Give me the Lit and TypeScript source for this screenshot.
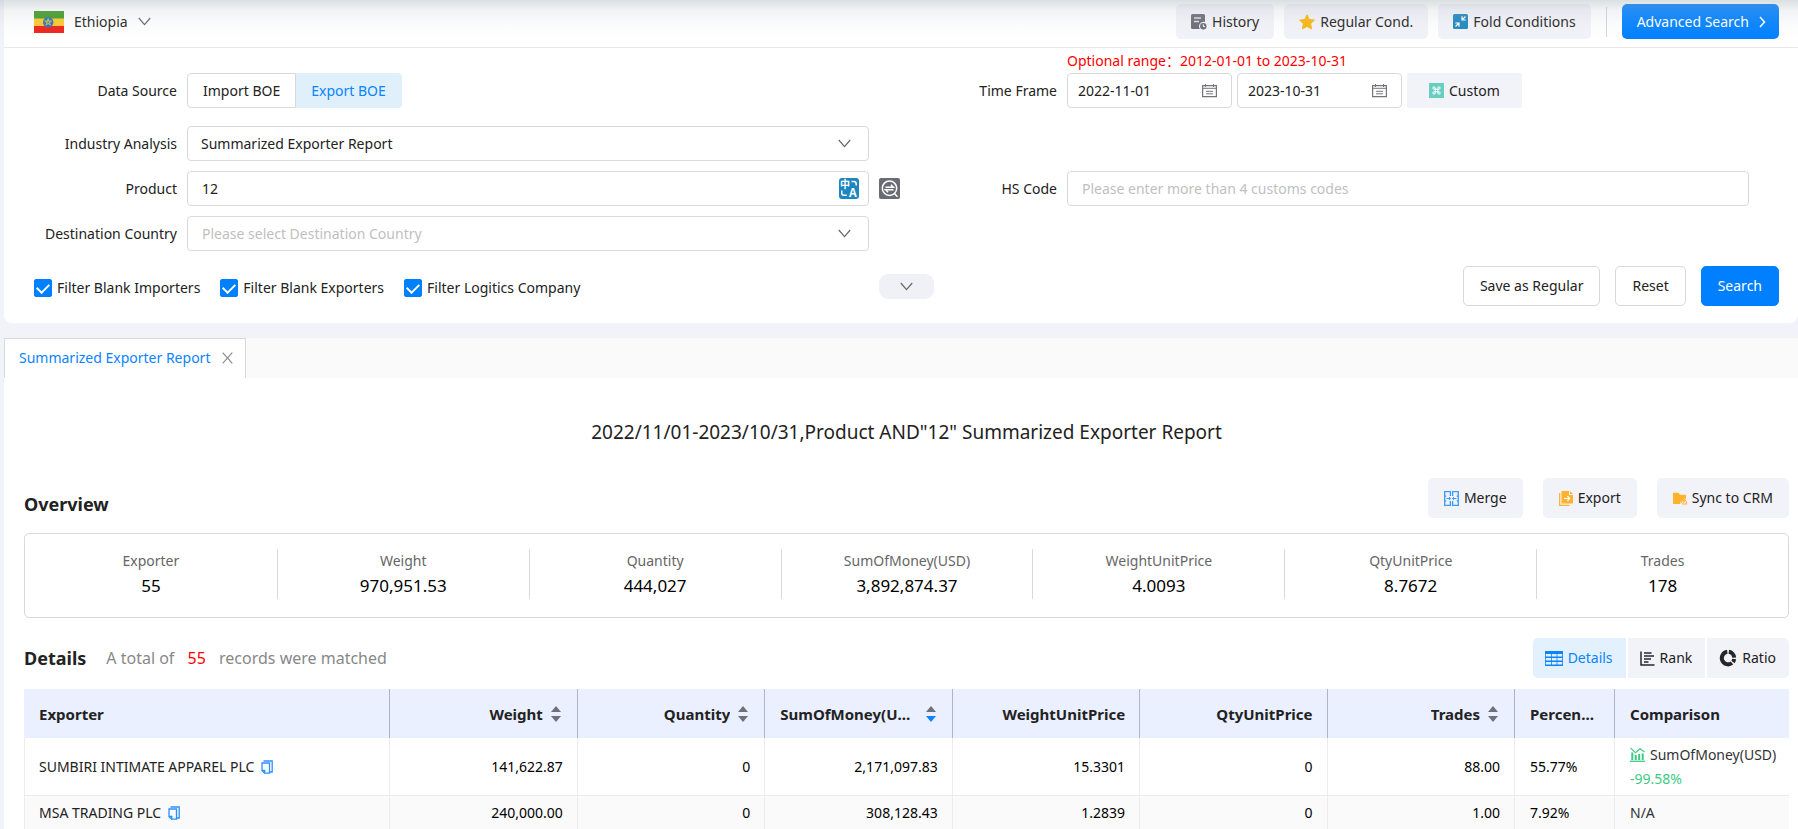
import { LitElement, html, css, nothing } from 'lit';
import { customElement, property, state } from 'lit/decorators.js';
import { classMap } from 'lit/directives/class-map.js';

const chevron = html`<svg class="chevron" width="13" height="9" viewBox="0 0 13 9" fill="none" stroke="#666" stroke-width="1.2"><path d="M.8 1l5.700 6.600L12.200 1" /></svg>`;

const icons: Record<string, unknown> = {
  history: html`<svg width="16" height="16" viewBox="0 0 16 16"><path d="M1.5 0h11A1.5 1.5 0 0 1 14 1.5V8a4.500 4.500 0 0 0-5 7H1.500A1.500 1.500 0 0 1 0 13.500v-12A1.500 1.500 0 0 1 1.500 0z" fill="#6b6b75"/><path d="M3 4h7M3 7.500h5" stroke="#dcdde5" stroke-width="1.6"/><circle cx="12.300" cy="12.200" r="3.200" fill="#6b6b75"/><path d="M12.300 10.300v2.200h1.600" fill="none" stroke="#fff" stroke-width="1"/></svg>`,
  star: html`<svg width="16" height="16" viewBox="0 0 16 16"><path d="M8 .8l2.200 4.700 5.200.6-3.800 3.600 1 5.200L8 12.400l-4.600 2.500 1-5.200L.6 6.100l5.200-.6z" fill="#f8b60f" stroke="#f8b60f" stroke-linejoin="round"/></svg>`,
  fold: html`<svg width="15" height="15" viewBox="0 0 15 15"><rect width="15" height="15" rx="1.5" fill="#1d86bf"/><path d="M12.500 2.500L9.500 5.500M9 2.300v3.700h3.700M2.500 12.500l3-3M2.300 9H6v3.700" fill="none" stroke="#fff" stroke-width="1.2"/></svg>`,
  custom: html`<svg width="15" height="15" viewBox="0 0 15 15"><rect width="15" height="15" fill="#67cfc0"/><path d="M6.200 6.200V5A1.200 1.200 0 1 0 5 6.200h5A1.200 1.200 0 1 0 8.800 5v5A1.200 1.200 0 1 0 10 8.800H5A1.200 1.200 0 1 0 6.200 10z" fill="none" stroke="#fff" stroke-width="1"/></svg>`,
  calendar: html`<svg width="15" height="14" viewBox="0 0 15 14" fill="none" stroke="#74747e"><path d="M.6 1.700h13.800v11H.6z" stroke-width="1.2"/><path d="M.6 4.300h13.800M3.500 0v3M11.500 0v3M4 7.300h7M4 9.800h7"/></svg>`,
  merge: html`<svg width="15" height="15" viewBox="0 0 15 15" fill="none" stroke="#3a9bff" stroke-width="1.3"><path d="M6.400 5V.7H.7v4.500h1.600M.7 5v9.300h5.700V10M.7 9.800h1.600M8.600 5V.7h5.700v4.500h-1.600M14.300 5v9.300H8.600V10M14.300 9.800h-1.600"/><path d="M2.500 7.500h3.800M5 6l1.500 1.500L5 9M12.500 7.500H8.700M10 6L8.500 7.500 10 9" stroke-width="1"/></svg>`,
  export: html`<svg width="14" height="15" viewBox="0 0 14 15"><path d="M.7 2v12.300h9.800" fill="none" stroke="#ffb22c" stroke-width="1.3"/><path d="M2.500 0H10v4h4v8.500H2.500z" fill="#ffb22c"/><path d="M11 0l3 3h-3z" fill="#ffb22c"/><path d="M5 7.500h5.500M8.400 5.200l2.300 2.300-2.300 2.300" fill="none" stroke="#fff" stroke-width="1.2"/></svg>`,
  sync: html`<svg width="14" height="13" viewBox="0 0 14 13"><path d="M0 .8h5.500l1.500 2h6v4.400l-2-1-1 2.200-3 1.400V12H0z" fill="#ffb22c"/><path d="M8 11.500c0-2 1-3 3.200-3M10 6.300l2.500 2.200L10 10.600M9 12h4.500V9.500" fill="none" stroke="#ffb22c" stroke-width="1.2"/></svg>`,
  details: html`<svg width="18" height="15" viewBox="0 0 18 15" fill="none" stroke="#0a84ff"><path d="M0 1.500h18" stroke-width="3"/><path d="M.5 1v13.500h17V1M6.500 2v12M12 2v12" stroke-width=".8"/><path d="M0 6.200h18M0 10.200h18M0 14.300h18" stroke-width="1.4"/></svg>`,
  rank: html`<svg width="15" height="15" viewBox="0 0 15 15" fill="none" stroke="#26262a"><path d="M1 .5V14h13.500" stroke-width="1.5"/><path d="M4 2h7.500M4 5h10M4 8h7M4 11h4.500" stroke-width="1.5"/></svg>`,
  ratio: html`<svg width="18" height="18" viewBox="0 0 18 18" fill="none" stroke="#26262a" stroke-width="4"><path d="M8.300 2.800A6.300 6.300 0 1 0 13 14"/><path d="M9.800 2.800A6.300 6.300 0 0 1 15.200 8.600"/><path d="M15.200 10A6.300 6.300 0 0 1 14 13"/></svg>`,
  copy: html`<svg width="12" height="14" viewBox="0 0 12 14" fill="none" stroke="#2b90ff" stroke-width="1.3"><path d="M2.500 1h8.700v11H9"/><path d="M1 3h7.500v10.200H3.500L1 10.700z"/><path d="M1 10.500h2.700v2.700"/></svg>`,
  trend: html`<svg width="15" height="15" viewBox="0 0 15 15" fill="none" stroke="#3ccb83"><path d="M0 14.300h15" stroke-width="1.3"/><path d="M2.300 5.500V13M5.700 8V13M9.200 7V13M12.700 6.500V13" stroke-width="2"/><path d="M.5 .8l5 5 4.500-4L14.500 5" stroke-width="1.2"/></svg>`,
};

const close = html`<svg width="11" height="12" viewBox="0 0 11 12" stroke="#8c8c8c" stroke-width="1.2"><path d="M.7 .7l9.600 10.600M10.300 .7L.7 11.300" /></svg>`;

const flag = html`<svg class="flag" width="30" height="22" viewBox="0 0 30 22" role="img" aria-label="Ethiopia flag"><path fill="#3f9a24" d="M0 0h30v8H0z"/><path fill="#fdc82f" d="M0 7.500h30v8H0z"/><path fill="#ef2118" d="M0 15h30v7H0z"/><circle cx="14.200" cy="11.300" r="5.200" fill="#2a6ebb"/><path d="M14.200 7.500l2.300 6.700-5.800-4.200h7l-5.800 4.200z" fill="none" stroke="#d9c64a" stroke-width=".8"/></svg>`;

const shared = css`
  * { box-sizing: border-box; }
  button, input, select { font: inherit; color: inherit; margin: 0; }
  button { cursor: pointer; padding: 0; border: 0; background: none; }
  svg { display: block; flex: none; overflow: visible; }
`;

@customElement('icon-button')
class IconButton extends LitElement {
  @property() icon = '';
  @property({ reflect: true }) size = 'small';
  static styles = [shared, css`
    :host { display: block; }
    button { display: flex; align-items: center; justify-content: center; gap: 5px; height: 35px; padding: 0 15px; border-radius: 5px; background: #f2f3f9; white-space: nowrap; }
    :host([size='large']) button { height: 40px; padding: 0 16px; }
    :host([size='wide']) button { padding: 0 22px; border-radius: 2px; }
  `];
  render() {
    return html`<button type="button">${icons[this.icon] ?? nothing}<slot></slot></button>`;
  }
}

interface Column { name: string; sort?: 'none' | 'desc'; align: 'left' | 'right'; kind: string; }

const columns: Column[] = [
  { name: 'Exporter', align: 'left', kind: 'name' },
  { name: 'Weight', align: 'right', sort: 'none', kind: 'num' },
  { name: 'Quantity', align: 'right', sort: 'none', kind: 'num' },
  { name: 'SumOfMoney(USD)', align: 'right', sort: 'desc', kind: 'num' },
  { name: 'WeightUnitPrice', align: 'right', kind: 'num' },
  { name: 'QtyUnitPrice', align: 'right', kind: 'num' },
  { name: 'Trades', align: 'right', sort: 'none', kind: 'num' },
  { name: 'Percentage', align: 'left', kind: 'pct' },
  { name: 'Comparison', align: 'left', kind: 'cmp' },
];

const rows = [
  { name: 'SUMBIRI INTIMATE APPAREL PLC', nums: ['141,622.87', '0', '2,171,097.83', '15.3301', '0', '88.00'], pct: '55.77%', change: '-99.58%' },
  { name: 'MSA TRADING PLC', nums: ['240,000.00', '0', '308,128.43', '1.2839', '0', '1.00'], pct: '7.92%', change: '' },
];

@customElement('exporter-table')
class ExporterTable extends LitElement {
  static styles = [shared, css`
    :host { display: block; }
    table { width: 100%; table-layout: fixed; border-collapse: separate; border-spacing: 0; }
    .c-num { width: 10.62%; }
    .c-pct { width: 100px; }
    .c-cmp { width: 174px; }
    th { height: 49px; padding: 0 14px 0 15px; background: #eaf0ff; border-right: 1px solid #b0b3c4; font-size: 15px; font-weight: 700; color: #222; text-align: left; }
    th:last-child { border-right: 0; }
    .head { display: flex; align-items: center; gap: 8px; width: 100%; font-weight: 700; }
    .head.right { justify-content: flex-end; }
    button.head { padding-right: 2px; }
    .label { overflow: hidden; text-overflow: ellipsis; white-space: nowrap; }
    td { height: 35px; padding: 0 14px 0 15px; border-right: 1px solid #ececec; border-bottom: 1px solid #ececec; line-height: 24px; color: #000; white-space: nowrap; }
    td:first-child { padding-left: 14px; border-left: 1px solid #ececec; color: #222; }
    td:last-child { border-right: 0; padding-right: 0; color: #333; }
    tr:nth-child(even) td { background: #fafafa; }
    tr.tall td { height: 58px; }
    .right { text-align: right; }
    .line { display: flex; align-items: center; gap: 7px; }
    .trend { display: flex; align-items: center; gap: 5px; }
    .down { color: #3ccb83; }
  `];
  render() {
    return html`<table>
      <colgroup>${columns.map((c) => html`<col class="c-${c.kind}">`)}</colgroup>
      <thead><tr>${columns.map((c) => html`<th scope="col">${c.sort
        ? html`<button type="button" class="head ${c.align}"><span class="label">${c.name}</span><svg width="10" height="16" viewBox="0 0 10 16"><path d="M0 6l5-6 5 6z" fill="#70707a"/><path d="M0 10l5 6 5-6z" fill=${c.sort === 'desc' ? '#0a84ff' : '#70707a'}/></svg></button>`
        : html`<div class="head ${c.align}"><span class="label">${c.name}</span></div>`}</th>`)}</tr></thead>
      <tbody>${rows.map((r) => html`<tr class=${classMap({ tall: !!r.change })}>
        <td><div class="line">${r.name}<button type="button" aria-label="Copy name">${icons.copy}</button></div></td>
        ${r.nums.map((n) => html`<td class="right">${n}</td>`)}
        <td>${r.pct}</td>
        <td>${r.change ? html`<div class="trend">${icons.trend}SumOfMoney(USD)</div><div class="down">${r.change}</div>` : 'N/A'}</td>
      </tr>`)}</tbody>
    </table>`;
  }
}

@customElement('app-root')
class AppRoot extends LitElement {
  @state() private source = 'Export BOE';

  static styles = [shared, css`
    :host { display: block; position: relative; height: 100vh; overflow: hidden; padding-left: 4px; background: #f2f3f9; color: #222; font: 14px/20px "Noto Sans", "Noto Sans CJK SC", sans-serif; }
    .shade { position: absolute; inset: 0 0 auto 0; height: 42px; pointer-events: none; background: linear-gradient(rgba(160, 172, 180, .38), rgba(180, 190, 196, .2) 10px, rgba(200, 206, 210, .08) 24px, rgba(255, 255, 255, 0)); }
    .search { background: #fff; border-radius: 0 0 8px 8px; }
    header { display: flex; align-items: center; gap: 10px; height: 48px; padding: 0 19px 4px 30px; border-bottom: 1px solid #e8e8e8; }
    .country { display: flex; align-items: center; gap: 10px; margin-right: auto; }
    .rule { width: 1px; height: 30px; margin: 0 5px; background: #d5d5da; }
    .primary { background: #0080ff; color: #fff; border-radius: 5px; }
    .advanced { display: flex; align-items: center; gap: 10px; height: 35px; padding: 0 13px 0 15px; }
    .fields { display: grid; grid-template-columns: 1fr 1fr; gap: 10px 0; padding: 0 17px; }
    .field { display: grid; grid-template-columns: 156px minmax(0, 1fr) 22px; gap: 0 10px; align-items: end; }
    .field.first { margin-bottom: 8px; }
    .field.start { grid-column: 1; }
    .field > .name { line-height: 35px; text-align: right; }
    .box { display: flex; align-items: center; height: 35px; border: 1px solid #d9d9d9; border-radius: 4px; background: #fff; }
    .box input { flex: 1; min-width: 0; height: 33px; border: 0; outline: 0; background: none; padding: 0 0 0 14px; }
    .box input::placeholder { color: #bfbfbf; }
    .pick { display: grid; grid-template-columns: minmax(0, 1fr) 30px; align-items: center; }
    .pick select { grid-area: 1 / 1 / 2 / 3; height: 33px; padding: 0 30px 0 13px; border: 0; outline: 0; appearance: none; background: none; }
    .pick .chevron { grid-area: 1 / 2; pointer-events: none; }
    .pick .empty { padding-left: 14px; color: #bfbfbf; }
    .translate { margin-right: 9px; }
    .lookup { align-self: center; }
    .radios { display: flex; }
    .radios label { display: flex; align-items: center; height: 35px; padding: 0 15px; border: 1px solid #d9d9d9; border-radius: 4px 0 0 4px; cursor: pointer; }
    .radios label + label { border-radius: 0 4px 4px 0; border-left: 0; }
    .radios label.on { background: #dff0fa; border-color: #dff0fa; color: #0a84ff; }
    .radios input { position: absolute; opacity: 0; pointer-events: none; }
    .hint { color: #f00; line-height: 25px; }
    .times { display: flex; gap: 5px; }
    .times .box { width: 165px; padding-right: 14px; }
    .times input { padding-left: 10px; }
    .foot { display: grid; grid-template-columns: 1fr auto 1fr; align-items: center; padding: 15px 19px 17px 30px; }
    .checks { display: flex; gap: 20px; padding-top: 4px; }
    .checks label { display: flex; align-items: center; gap: 5px; }
    .checks input { appearance: none; display: grid; place-items: center; width: 18px; height: 18px; border: 1px solid #0080ff; border-radius: 2px; }
    .checks input:checked { background: #0080ff; }
    .checks input:checked::after { content: ""; width: 6px; height: 10px; margin-bottom: 3px; border: solid #fff; border-width: 0 2px 2px 0; transform: rotate(45deg); }
    .more { display: grid; place-items: center; width: 55px; height: 25px; border-radius: 9px; background: #f0f1f7; }
    .go { display: flex; justify-content: flex-end; gap: 15px; }
    .go button { height: 40px; padding: 0 16px; border-radius: 5px; border: 1px solid #d9d9d9; }
    .go .primary { border-color: #0080ff; }
    .tabs { display: flex; margin-top: 15px; height: 40px; background: #fafafa; }
    .tab { display: flex; align-items: center; gap: 12px; padding: 0 12px 2px 14px; border: 1px solid #d9d9d9; border-bottom: 0; background: #fff; color: #0a84ff; }
    .report { min-height: 460px; padding: 39px 9px 0 20px; background: #fff; }
    h1 { margin: 0 0 31px; font-size: 19px; line-height: 30px; font-weight: 400; text-align: center; }
    h2 { margin: 0; font-size: 18px; line-height: 28px; font-weight: 700; }
    .bar { display: flex; align-items: flex-end; justify-content: space-between; }
    .actions { display: flex; gap: 20px; }
    .totals { display: grid; grid-template-columns: repeat(7, 1fr); margin: 15px 0 20px; padding: 15px 0 18px; border: 1px solid #d9d9d9; border-radius: 5px; text-align: center; }
    .total { margin: 0; border-left: 1px solid #d9d9d9; }
    .total:first-child { border-left: 0; }
    .total dt { line-height: 24px; color: #666; }
    .total dd { margin: 0; font-size: 17px; line-height: 26px; color: #000; }
    .details { align-items: center; margin-bottom: 11px; }
    .summary { display: flex; align-items: center; gap: 20px; font-size: 16px; color: #888; }
    .summary h2 { color: #222; }
    .summary p { margin: 0; }
    .count { margin: 0 9px; color: #f00; }
    .views { display: flex; gap: 2px; border-radius: 5px; overflow: hidden; }
    .views button { display: flex; align-items: center; gap: 5px; height: 40px; padding: 0 13px 0 12px; background: #f2f3f9; }
    .views .on { background: #e3f1fe; color: #0a84ff; }
  `];

  private date(id: string, label: string, value: string) {
    return html`<div class="box"><input id=${id} type="text" aria-label=${label} .value=${value}>${icons.calendar}</div>`;
  }

  render() {
    const totals = [['Exporter', '55'], ['Weight', '970,951.53'], ['Quantity', '444,027'], ['SumOfMoney(USD)', '3,892,874.37'], ['WeightUnitPrice', '4.0093'], ['QtyUnitPrice', '8.7672'], ['Trades', '178']];
    return html`
      <section class="search">
        <header>
          <button type="button" class="country">${flag}<span>Ethiopia</span>${chevron}</button>
          <icon-button icon="history">History</icon-button>
          <icon-button icon="star">Regular Cond.</icon-button>
          <icon-button icon="fold">Fold Conditions</icon-button>
          <span class="rule"></span>
          <button type="button" class="primary advanced">Advanced Search<svg width="7" height="12" viewBox="0 0 7 12" fill="none" stroke="#fff" stroke-width="1.5"><path d="M1 1l4.500 5L1 11"/></svg></button>
        </header>

        <div class="fields">
          <div class="field first">
            <span class="name" id="source">Data Source</span>
            <div class="radios" role="radiogroup" aria-labelledby="source">
              ${['Import BOE', 'Export BOE'].map((s) => html`<label class=${classMap({ on: this.source === s })}><input type="radio" name="source" .checked=${this.source === s} @change=${() => (this.source = s)}>${s}</label>`)}
            </div>
          </div>
          <div class="field first">
            <label class="name" for="from">Time Frame</label>
            <div>
              <div class="hint">Optional range：2012-01-01 to 2023-10-31</div>
              <div class="times">
                ${this.date('from', 'From', '2022-11-01')}
                ${this.date('to', 'To', '2023-10-31')}
                <icon-button size="wide" icon="custom">Custom</icon-button>
              </div>
            </div>
          </div>

          <div class="field start">
            <label class="name" for="industry">Industry Analysis</label>
            <div class="box pick"><select id="industry"><option>Summarized Exporter Report</option></select>${chevron}</div>
          </div>

          <div class="field start">
            <label class="name" for="product">Product</label>
            <div class="box"><input id="product" type="text" value="12">
              <button type="button" class="translate" aria-label="Translate"><svg width="20" height="21" viewBox="0 0 20 21"><rect width="20" height="21" rx="3" fill="#1d86bf"/><g fill="#fff" font-family="Noto Sans CJK SC, sans-serif" font-weight="700"><text x="1" y="10" font-size="10">中</text><text x="10" y="18.500" font-size="12">A</text></g><path d="M12.500 3.500h2.200a2.500 2.500 0 0 1 2.500 2.500v1.500M2.800 12.500v2.800a2 2 0 0 0 2 2h3" fill="none" stroke="#fff" stroke-width="1.5"/></svg></button>
            </div>
            <button type="button" class="lookup" aria-label="Look up"><svg width="21" height="21" viewBox="0 0 21 21"><rect width="21" height="21" rx="2" fill="#6b6b75"/><g fill="none" stroke="#fff" stroke-width="1.5"><circle cx="10.500" cy="10.200" r="7.200"/><path d="M15.500 15.500l3 3.300M6.500 9.300h8l-2.600-2.600M14.500 11.800h-8l2.600 2.500"/></g></svg></button>
          </div>
          <div class="field">
            <label class="name" for="hs">HS Code</label>
            <div class="box"><input id="hs" type="text" placeholder="Please enter more than 4 customs codes"></div>
          </div>

          <div class="field start">
            <label class="name" for="destination">Destination Country</label>
            <div class="box pick"><select id="destination" class="empty"><option>Please select Destination Country</option></select>${chevron}</div>
          </div>
        </div>

        <div class="foot">
          <div class="checks">
            ${['Filter Blank Importers', 'Filter Blank Exporters', 'Filter Logitics Company'].map((c) => html`<label><input type="checkbox" checked>${c}</label>`)}
          </div>
          <button type="button" class="more" aria-label="Show more conditions">${chevron}</button>
          <div class="go">
            <button type="button">Save as Regular</button>
            <button type="button">Reset</button>
            <button type="button" class="primary">Search</button>
          </div>
        </div>
      </section>

      <nav class="tabs"><div class="tab"><span>Summarized Exporter Report</span><button type="button" aria-label="Close tab">${close}</button></div></nav>

      <main class="report">
        <h1>2022/11/01-2023/10/31,Product AND"12" Summarized Exporter Report</h1>
        <div class="bar">
          <h2>Overview</h2>
          <div class="actions">
            <icon-button size="large" icon="merge">Merge</icon-button>
            <icon-button size="large" icon="export">Export</icon-button>
            <icon-button size="large" icon="sync">Sync to CRM</icon-button>
          </div>
        </div>
        <div class="totals">${totals.map(([k, v]) => html`<dl class="total"><dt>${k}</dt><dd>${v}</dd></dl>`)}</div>
        <div class="bar details">
          <div class="summary"><h2>Details</h2><p>A total of <span class="count">55</span> records were matched</p></div>
          <div class="views">
            <button type="button" class="on">${icons.details}Details</button>
            <button type="button">${icons.rank}Rank</button>
            <button type="button">${icons.ratio}Ratio</button>
          </div>
        </div>
        <exporter-table></exporter-table>
      </main>
      <div class="shade"></div>
    `;
  }
}
